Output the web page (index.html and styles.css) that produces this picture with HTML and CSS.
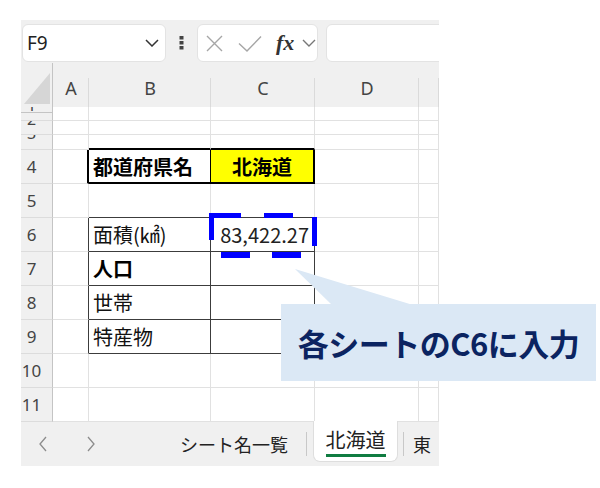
FILE: index.html
```html
<!DOCTYPE html>
<html lang="ja">
  <head>
    <meta charset="UTF-8" />
    <title>Sheet</title>
    <link rel="stylesheet" href="styles.css">
  </head>
  <body>
    <div class="stage">
      <div class="app">
        <div class="toolbar">
          <div class="namebox">
            <span>F9</span>
            <svg width="14" height="8" viewBox="0 0 14 8"><polyline points="1,1 7,7 13,1" fill="none" stroke="#333" stroke-width="1.5"/></svg>
          </div>
          <div class="dots">
            <svg width="5" height="14" viewBox="0 0 5 14"><rect x="0.5" y="0" width="4" height="3.5" fill="#444"/><rect x="0.5" y="5" width="4" height="3.5" fill="#444"/><rect x="0.5" y="10" width="4" height="3.5" fill="#444"/></svg>
          </div>
          <div class="fxbox">
            <svg class="ico-x" width="17" height="17" viewBox="0 0 17 17"><path d="M1 1L16 16M16 1L1 16" stroke="#a6a6a6" stroke-width="1.4"/></svg>
            <svg class="ico-ok" width="24" height="17" viewBox="0 0 24 17"><polyline points="1,8.5 9,16 23,1.5" fill="none" stroke="#a6a6a6" stroke-width="1.4"/></svg>
            <span class="fx">fx</span>
            <svg width="14" height="8" viewBox="0 0 14 8"><polyline points="1,1 7,7 13,1" fill="none" stroke="#777" stroke-width="1.4"/></svg>
          </div>
          <div class="formula"></div>
        </div>

        <div class="row hdr">
          <div class="corner"><svg width="31" height="44" viewBox="0 0 31 44"><polygon points="29,10 29,41 3,41" fill="#d6d6d6"/></svg></div>
          <div class="ch">A</div>
          <div class="ch">B</div>
          <div class="ch">C</div>
          <div class="ch">D</div>
          <div class="ch"></div>
        </div>

        <div class="row r14"><div class="rh tiny"><span>1</span></div><div class="c"></div><div class="c"></div><div class="c"></div><div class="c"></div><div class="c"></div></div>
        <div class="row r14"><div class="rh tiny"><span>2</span></div><div class="c"></div><div class="c"></div><div class="c"></div><div class="c"></div><div class="c"></div></div>
        <div class="row r15"><div class="rh tiny"><span>3</span></div><div class="c"></div><div class="c t2b"></div><div class="c t2b"></div><div class="c"></div><div class="c"></div></div>

        <div class="row"><div class="rh">4</div><div class="c t2r"></div><div class="c key">都道府県名</div><div class="c pref">北海道</div><div class="c"></div><div class="c"></div></div>
        <div class="row"><div class="rh">5</div><div class="c"></div><div class="c tb"></div><div class="c tb"></div><div class="c"></div><div class="c"></div></div>
        <div class="row"><div class="rh">6</div><div class="c tr"></div><div class="c tc">面積(㎢)</div><div class="c tc num">83,422.27</div><div class="c"></div><div class="c"></div></div>
        <div class="row"><div class="rh">7</div><div class="c tr"></div><div class="c tc bold">人口</div><div class="c tc"></div><div class="c"></div><div class="c"></div></div>
        <div class="row"><div class="rh">8</div><div class="c tr"></div><div class="c tc">世帯</div><div class="c tc"></div><div class="c"></div><div class="c"></div></div>
        <div class="row"><div class="rh">9</div><div class="c tr"></div><div class="c tc">特産物</div><div class="c tc"></div><div class="c"></div><div class="c"></div></div>
        <div class="row"><div class="rh">10</div><div class="c"></div><div class="c"></div><div class="c"></div><div class="c"></div><div class="c"></div></div>
        <div class="row"><div class="rh">11</div><div class="c"></div><div class="c"></div><div class="c"></div><div class="c"></div><div class="c"></div></div>

        <div class="tabs">
          <svg class="nav" width="10" height="16" viewBox="0 0 10 16"><polyline points="8,1 2,8 8,15" fill="none" stroke="#8c8c8c" stroke-width="1.3"/></svg>
          <svg class="nav next" width="10" height="16" viewBox="0 0 10 16"><polyline points="2,1 8,8 2,15" fill="none" stroke="#8c8c8c" stroke-width="1.3"/></svg>
          <div class="tab first">シート名一覧</div>
          <div class="sep"></div>
          <div class="tab active"><span>北海道</span></div>
          <div class="sep"></div>
          <div class="tab">東</div>
        </div>
      </div>

      <!-- copy marquee around C6 and the callout pointer -->
      <svg class="overlay" width="600" height="488" viewBox="0 0 600 488">
        <rect x="209" y="213" width="32" height="5" fill="#0000ff"/>
        <rect x="264" y="213" width="29" height="5" fill="#0000ff"/>
        <rect x="209" y="213" width="5" height="27" fill="#0000ff"/>
        <rect x="312" y="217" width="5" height="29" fill="#0000ff"/>
        <rect x="221" y="252" width="29" height="6" fill="#0000ff"/>
        <rect x="272" y="252" width="29" height="6" fill="#0000ff"/>
        <polygon points="295,269 332,305 413,305" fill="#dbe8f5"/>
      </svg>
      <div class="callout">各シートのC6に入力</div>
    </div>
  </body>
</html>
```

FILE: styles.css
```css
body {
  margin: 0;
  background: #fff;
  font-family: "Noto Sans", "Noto Sans CJK JP", sans-serif;
}

.stage {
  position: relative;
  width: 600px;
  height: 488px;
  padding: 20px 0 0 21px;
  box-sizing: border-box;
}

.app {
  width: 418px;
  height: 446px;
  background: #f0f0f0;
  overflow: hidden;
}

/* toolbar */
.toolbar {
  height: 43px;
  display: flex;
  align-items: flex-start;
  padding: 4px 0 0 1px;
  box-sizing: border-box;
}

.toolbar > * {
  flex: none;
}

.namebox {
  width: 144px;
  height: 38px;
  background: #fff;
  border: 1px solid #e3e3e3;
  border-radius: 6px;
  box-sizing: border-box;
  display: flex;
  align-items: center;
  justify-content: space-between;
  padding: 0 6px 0 4px;
  font-size: 19px;
  color: #222;
}

.dots {
  width: 31px;
  height: 38px;
  display: flex;
  align-items: center;
  justify-content: center;
}

.fxbox {
  width: 121px;
  height: 38px;
  background: #fff;
  border: 1px solid #e3e3e3;
  border-radius: 6px;
  box-sizing: border-box;
  display: flex;
  align-items: center;
  padding-left: 8px;
}

.ico-x {
  margin-right: 15px;
}

.ico-ok {
  margin-right: 14px;
}

.fx {
  font-family: "Liberation Serif", serif;
  font-style: italic;
  font-weight: bold;
  font-size: 22px;
  color: #333;
  margin-right: 8px;
  line-height: 1;
}

.formula {
  width: 200px;
  height: 38px;
  margin-left: 8px;
  background: #fff;
  border: 1px solid #e3e3e3;
  border-radius: 6px;
  box-sizing: border-box;
}

/* grid */
.row {
  display: grid;
  grid-template-columns: 32px 36px 122px 104px 104px 20px;
  height: 34px;
}

.row.r14 {
  height: 14px;
}

.row.r15 {
  height: 15px;
}

.row.hdr {
  height: 44px;
}

.corner {
  border-right: 1px solid #c4c4c4;
  border-bottom: 1px solid #c4c4c4;
  box-sizing: border-box;
}

.ch {
  box-sizing: border-box;
  border-bottom: 1px solid #c4c4c4;
  background: linear-gradient(#dadada, #dadada) right bottom / 1px 34px no-repeat;
  display: flex;
  align-items: center;
  justify-content: center;
  font-size: 18px;
  color: #444;
  padding-top: 1px;
}

.rh {
  box-sizing: border-box;
  border-right: 1px solid #c4c4c4;
  border-bottom: 1px solid #dcdcdc;
  display: flex;
  align-items: center;
  justify-content: center;
  padding-right: 10px;
  font-size: 17px;
  color: #444;
  overflow: hidden;
}

.rh.tiny {
  display: block;
  text-align: center;
  font-size: 16px;
  line-height: 16px;
}

.rh.tiny span {
  display: block;
  margin-top: -10px;
}

.c {
  background: #fff;
  box-sizing: border-box;
  border-right: 1px solid #e1e1e1;
  border-bottom: 1px solid #e1e1e1;
  display: flex;
  align-items: center;
  padding-left: 4px;
  font-family: "Noto Sans CJK JP", sans-serif;
  font-size: 20px;
  color: #111;
  white-space: nowrap;
  overflow: hidden;
}

/* table borders */
.t2b {
  border-bottom: 2px solid #000;
}

.t2r {
  border-right: 2px solid #000;
}

.key {
  font-weight: bold;
  color: #000;
  border-bottom: 2px solid #000;
  border-right: 1px solid #000;
}

.pref {
  background: #ffff00;
  font-weight: bold;
  color: #000;
  justify-content: center;
  padding-left: 0;
  border-bottom: 2px solid #000;
  border-right: 2px solid #000;
}

.tb {
  border-bottom: 1px solid #3c3c3c;
}

.tr {
  border-right: 1px solid #3c3c3c;
}

.tc {
  border-right: 1px solid #3c3c3c;
  border-bottom: 1px solid #3c3c3c;
}

.num {
  justify-content: flex-end;
  padding: 0 5px 0 0;
  color: #222;
}

.bold {
  font-weight: bold;
  color: #000;
}

/* sheet tabs */
.tabs {
  height: 44px;
  display: flex;
  align-items: center;
  padding-left: 17px;
  font-family: "Noto Sans CJK JP", sans-serif;
  font-size: 18px;
  color: #222;
}

.tabs > * {
  flex: none;
}

.nav.next {
  margin-left: 38px;
}

.tab {
  white-space: nowrap;
}

.tab.first {
  margin-left: 84px;
}

.sep {
  width: 1px;
  height: 24px;
  background: #c8c8c8;
  margin: 0 6px 0 18px;
}

.tab.active {
  align-self: flex-start;
  margin-top: -1px;
  height: 41px;
  width: 85px;
  box-sizing: border-box;
  background: #fff;
  border: 1px solid #dedede;
  border-top: none;
  border-radius: 0 0 7px 7px;
  display: flex;
  justify-content: center;
  padding-top: 7px;
  font-size: 20px;
}

.tab.active span {
  height: 26px;
  border-bottom: 3px solid #107c41;
  line-height: 24px;
}

.tab.active + .sep {
  margin: 0 9px 0 5px;
}

/* overlays */
.overlay {
  position: absolute;
  left: 0;
  top: 0;
  pointer-events: none;
}

.callout {
  position: absolute;
  left: 281px;
  top: 304px;
  width: 315px;
  height: 77px;
  background: #dbe8f5;
  display: flex;
  align-items: center;
  justify-content: center;
  font-family: "Noto Sans CJK JP", sans-serif;
  font-weight: bold;
  font-size: 31px;
  color: #0b2461;
  letter-spacing: -0.5px;
}
```
